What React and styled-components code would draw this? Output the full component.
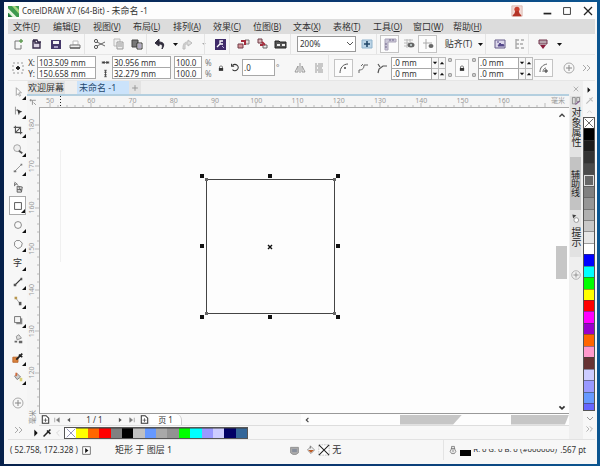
import React from 'react';
import styled, { createGlobalStyle } from 'styled-components';

const GlobalStyle = createGlobalStyle`
  * {
    box-sizing: border-box;
  }
  body {
    margin: 0;
    background: #0a2a55;
    color: #333;
    font-family: 'Noto Sans', 'Noto Sans CJK SC', sans-serif;
    font-size: 8px;
    line-height: 12px;
  }
  button,
  input,
  select {
    margin: 0;
    padding: 0;
    border: 0;
    background: none;
    color: inherit;
    font: inherit;
  }
  svg {
    display: block;
    flex: none;
  }
`;

/* ---------- frame ---------- */

const Desktop = styled.div`
  display: grid;
  min-height: 100vh;
  padding: 2px 3px 3px 4px;
  background: linear-gradient(90deg, #06204a 0, #0b3a74 60%, #0b5590 100%);
`;

const Window = styled.main`
  display: flex;
  flex-direction: column;
  min-width: 0;
  padding: 0 2px 0 4px;
  background: #f7f7f7;
  border-top: 1px solid #fdfdfd;
`;

const TitleBar = styled.header`
  display: flex;
  align-items: center;
  height: 16px;
  margin: 0 -2px 0 -4px;
  padding: 0 6px 0 4px;
  background: #fdfdfd;
`;

const Title = styled.h1`
  flex: 1;
  margin: 0 0 0 3px;
  font-size: 8px;
  font-weight: 400;

  span {
    font-size: 9px;
  }
`;

const CaptionButtons = styled.div`
  display: flex;
  align-items: center;
  gap: 10px;
`;

const CaptionButton = styled.button`
  display: grid;
  place-items: center;
  width: ${p => p.$width || 10}px;
  height: 14px;
`;

const MenuBar = styled.nav`
  display: flex;
  height: 15px;
  padding-left: 5px;
  background: #dcdcdc;
`;

const MenuItem = styled.button`
  width: 40px;
  color: #333;
  font-size: 9px;
  line-height: 15px;
  text-align: left;
  white-space: nowrap;

  small {
    font-size: 8px;
  }
`;

/* ---------- toolbars ---------- */

const Toolbar = styled.div`
  display: flex;
  align-items: center;
  height: ${p => p.$height}px;
  border-bottom: 1px solid #e6e6e6;
`;

const Group = styled.div`
  display: flex;
  align-items: center;
  height: 100%;
  padding-left: ${p => p.$pad || 0}px;
  border-left: ${p => (p.$line ? '1px solid #e4e4e4' : '0')};
`;

const ToolButton = styled.button`
  display: grid;
  flex: none;
  place-items: center;
  width: ${p => p.$width || 19}px;
  height: 18px;
  border: 1px solid ${p => (p.$boxed ? '#c4c4c4' : 'transparent')};
  background: ${p => (p.$boxed ? '#fcfcfc' : 'none')};
`;

const SnapButton = styled.button`
  width: 29px;
  font-size: 9px;
  white-space: nowrap;

  small {
    font-size: 8px;
  }
`;

const ZoomBox = styled.label`
  position: relative;
  width: 59px;
  height: 16px;
  margin: 0 1px 0 6px;

  select {
    width: 100%;
    height: 100%;
    padding-left: 2px;
    border: 1px solid #999;
    background: #fff;
    appearance: none;
  }
  svg {
    position: absolute;
    top: 1px;
    right: -1px;
    pointer-events: none;
  }
`;

const Stack = styled.div`
  display: flex;
  flex-direction: column;
  flex: none;
`;

const FieldLabel = styled.label`
  display: flex;
  align-items: center;
  gap: 2px;
  height: 11px;
  line-height: 11px;
`;

const FieldName = styled.span`
  width: 7px;
  text-align: right;
`;

const Field = styled.input`
  width: ${p => p.$width}px;
  height: ${p => p.$height || 12}px;
  padding-left: 1px;
  border: 1px solid #a8a8a8;
  background: #fff;
  line-height: 10px;
`;

const SpinRow = styled.div`
  display: flex;
  height: 11px;

  button {
    display: grid;
    place-items: center;
    width: 7px;
    height: 12px;
    border: 1px solid #bbb;
    border-left: 0;
  }
`;

const Percent = styled.span`
  width: 11px;
  padding-left: 1px;
  color: #777;
  line-height: 11px;
`;

const CornerMarks = styled.div`
  display: flex;
  flex-direction: column;
  gap: 9px;
  padding: 0 1px;
`;

const Spacer = styled.div`
  flex: ${p => (p.$size ? `0 0 ${p.$size}px` : '1')};
`;

/* ---------- work area ---------- */

const WorkArea = styled.div`
  display: grid;
  flex: 1;
  grid-template-columns: 19px minmax(0, 1fr) 14px 12px;
`;

const Toolbox = styled.aside`
  display: flex;
  flex-direction: column;
  align-items: center;
  padding-top: 1px;
`;

const ToolSlot = styled.button`
  position: relative;
  display: grid;
  flex: 0 0 19px;
  place-items: center;
  width: 17px;
  border: ${p => (p.$active ? '1px solid #aaa' : '0')};
  background: ${p => (p.$active ? '#fff' : 'none')};
  font-size: 9px;

  &::after {
    position: absolute;
    right: 0;
    bottom: 1px;
    border: solid transparent;
    border-width: ${p => (p.$flyout ? '4px 0 0 4px' : '0')};
    border-right: ${p => (p.$flyout ? '4px solid #111' : '0')};
    border-left: 0;
    content: '';
  }
`;

const Document = styled.section`
  display: flex;
  flex-direction: column;
  min-width: 0;
`;

const Tabs = styled.div`
  display: flex;
  height: 15px;
  padding-left: 1px;
  background: #efefef;
  border-bottom: 2px solid #b4cfdf;
`;

const Tab = styled.button`
  width: ${p => p.$width}px;
  height: 13px;
  padding-left: ${p => p.$pad || 0}px;
  background: ${p => (p.$active ? '#cbe3fb' : '#e3e3e3')};
  color: ${p => (p.$active ? '#24486e' : '#333')};
  font-size: 9px;
  line-height: 13px;
  text-align: left;
  white-space: nowrap;
`;

const Sheet = styled.div`
  display: grid;
  flex: 1;
  grid-template-rows: 11px minmax(0, 1fr);
  grid-template-columns: 12px minmax(0, 1fr);
  min-height: 317px;

  > svg {
    width: 100%;
    height: 100%;
    overflow: visible;
  }
`;

const RulerCorner = styled.div`
  display: grid;
  place-items: center;
  background: #f5f5f5;
`;

const CanvasRow = styled.div`
  display: flex;
  min-width: 0;
  background: #fdfdfd;
  border-top: 1px solid #aaa;
  border-left: 1px solid #aaa;

  > svg {
    flex: 1;
    min-width: 0;
    height: 100%;
  }
`;

const VScroll = styled.div`
  display: flex;
  flex-direction: column;
  align-items: center;
  width: 14px;
  padding: 1px 2px 1px 0;

  button {
    display: grid;
    place-items: center;
    width: 10px;
    height: 10px;
  }
`;

const VThumb = styled.div`
  flex: 34 0 0;
  width: 11px;
  background: #c6c6c6;
`;

const Track = styled.div`
  flex: ${p => p.$grow} 0 0;
`;

const PageBar = styled.div`
  display: flex;
  align-items: center;
  height: 13px;
  margin-left: 12px;
  border-top: 1px solid #999;
  border-bottom: 1px solid #ddd;
`;

const PageButton = styled.button`
  display: grid;
  flex: none;
  place-items: center;
  width: 12px;
  height: 11px;
`;

const PageCount = styled.span`
  flex: 0 0 39px;
  line-height: 11px;
  text-align: center;
`;

const PageTab = styled.button`
  flex: 0 0 32px;
  height: 11px;
  background: #fff;
  border-right: 1px solid #ccc;
  border-radius: 0 6px 0 0;
  line-height: 11px;
`;

const HScroll = styled.div`
  display: flex;
  flex: 266 0 0;
  align-items: center;
  height: 11px;
  background: #fdfdfd;
`;

const HThumb = styled.div`
  flex: ${p => p.$grow} 0 0;
  height: 10px;
  background: #c6c6c6;
  clip-path: polygon(0 0, 100% 0, calc(100% - ${p => p.$cut}px) 100%, 0 100%);
`;

const PaletteRow = styled.div`
  display: flex;
  align-items: center;
  height: 13px;
  padding-left: 3px;

  > button {
    display: grid;
    place-items: center;
    width: 11px;
    height: 12px;
  }
`;

const Swatches = styled.div`
  display: flex;
  width: 184px;
  height: 12px;
  margin-left: 1px;
  border: 1px solid #555;
`;

const Swatch = styled.button`
  display: grid;
  flex: ${p => p.$grow || 1} 0 0;
  place-items: center;
  min-width: 0;
  min-height: 0;
  overflow: hidden;
  background: ${p => p.$color};
  box-shadow: inset 0 0 0 ${p => (p.$ring ? 1 : 0)}px #ddd;

  & + & {
    border: solid rgba(60, 60, 60, 0.5);
    border-width: ${p => (p.$column ? '1px 0 0' : '0 0 0 1px')};
  }
`;

const Dockers = styled.aside`
  display: flex;
  flex-direction: column;
  align-items: center;
  padding: 0 2px 0 1px;
  background: #efefef;
`;

const DockerTab = styled.button`
  display: flex;
  align-items: center;
  gap: 1px;
  width: 11px;
  height: ${p => p.$height}px;
  background: ${p => (p.$dark ? '#c3c3c3' : '#e2e2e2')};
  color: #222;
  font-size: ${p => (p.$dark ? 9 : 10)}px;
  line-height: 11px;
  writing-mode: vertical-rl;
`;

const DockerButton = styled.button`
  display: grid;
  place-items: center;
  width: 11px;
  height: ${p => p.$height}px;
`;

const PaletteColumn = styled.aside`
  display: flex;
  flex-direction: column;
  padding-top: 3px;

  > button {
    display: grid;
    flex: none;
    place-items: center;
    height: 11px;
  }
`;

const ColumnSwatches = styled.div`
  display: flex;
  flex: 1;
  flex-direction: column;
  margin-bottom: 1px;
  border: 1px solid #555;
`;

const StatusBar = styled.footer`
  display: flex;
  align-items: center;
  height: 25px;
  padding: 0 9px 4px 2px;
  border-top: 1px solid #e2e2e2;
`;

const Coordinates = styled.span`
  width: 71px;
  white-space: nowrap;
`;

const ObjectInfo = styled.span`
  flex: 1;
  padding-left: 24px;
  font-size: 9px;
`;

const FillInfo = styled.span`
  display: flex;
  align-items: center;
  gap: 2px;
  width: 143px;
  padding-left: 6px;
  font-size: 9px;
`;

const OutlineInfo = styled.span`
  display: flex;
  align-items: center;
  padding-left: 4px;
  border-left: 1px solid #e4e4e4;
  line-height: 20px;
  white-space: nowrap;
`;

const OutlineChip = styled.i`
  width: 11px;
  height: 6px;
  margin: 5px 2px 0 2px;
  background: #000;
`;

const OutlineColor = styled.span`
  width: 87px;
  font-family: Roboto, 'Noto Sans', sans-serif;
  line-height: 12px;
  clip-path: inset(5px 0 0 0);
`;

/* ---------- drawings ---------- */

const ICONS = {
  logo: (
    <>
      <path d="M0 0h14v14H0z" fill="#3d9a4e" />
      <path d="M0 3l11 11H6L0 8z" fill="#e8f5df" />
      <path d="M5 0l9 10V5L9 0z" fill="#a9d77e" />
      <path d="M0 10l4 4H0z" fill="#1f6d3b" />
    </>
  ),
  user: (
    <>
      <path d="M1 1h12v12H1z" fill="#f2d9d4" stroke="#d9b6ae" />
      <circle cx="7" cy="5" r="3" fill="#c9412f" />
      <path d="M5 7h4l1 3 2 2v1H2v-1l2-2z" fill="#b43427" />
    </>
  ),
  minimize: <path d="M3 10h9" stroke="#222" strokeWidth="2" />,
  maximize: <path d="M3 3h8v8H3z" fill="none" stroke="#222" />,
  close: <path d="M3 3l8 8M11 3l-8 8" stroke="#222" strokeWidth="1.3" />,
  fresh: (
    <>
      <path d="M8 4H4v8h6V8" fill="none" stroke="#777" />
      <path d="M8 4h4M10 2v4" stroke="#5f9a52" strokeWidth="1.4" />
    </>
  ),
  open: <path d="M3 4v7h7V6H5V4zM3 3h4l1 2h3" fill="#dcd4e4" stroke="#382d4c" strokeWidth="1.4" />,
  save: (
    <>
      <path d="M2 3h10v9H2z" fill="#44376a" />
      <path d="M4 4h6v3H4z" fill="#f4f4f4" />
      <path d="M5 9h4v2H5z" fill="#a99fc6" />
    </>
  ),
  print: (
    <>
      <path d="M5 4h5v4H5z" fill="#fff" stroke="#bbb" />
      <path d="M2 8h10v3H2z" fill="#eee" stroke="#777" />
      <path d="M2 11h10" stroke="#444" />
    </>
  ),
  cut: (
    <>
      <path d="M5 5l8 4M5 9l8-4" stroke="#666" />
      <circle cx="4" cy="4" r="1.6" fill="none" stroke="#555" />
      <circle cx="4" cy="10" r="1.6" fill="none" stroke="#555" />
    </>
  ),
  copy: (
    <>
      <path d="M3 2h6v7H3z" fill="#f0f0f0" stroke="#bbb" />
      <path d="M6 5h6v7H6z" fill="#eee" stroke="#999" />
      <path d="M7 7h4M7 9h4" stroke="#999" />
    </>
  ),
  paste: (
    <>
      <path d="M2 3h6v7H2z" fill="#777" stroke="#444" />
      <path d="M7 6h5v6H7z" fill="#fff" stroke="#333" />
      <path d="M8 8h3M8 10h3" stroke="#66588a" />
    </>
  ),
  undo: <path d="M6 2L2 6l4 3V7c3 0 4 1 3 5 3-4 2-7-3-7z" fill="#302c3c" stroke="#302c3c" />,
  redo: <path d="M8 3l4 3-4 3V7H5v5H3c0-5 1-7 5-7z" fill="#ddd" stroke="#bbb" />,
  search: (
    <>
      <path d="M2 2h11v11H2z" fill="#3f2b69" />
      <path d="M10 4H7v3h3M7 7L4 10" stroke="#fff" fill="none" strokeWidth="1.3" />
      <path d="M9 9l2 2" stroke="#b9a4e0" />
    </>
  ),
  importer: (
    <>
      <path d="M2 7h5v4H2z" fill="#d69499" stroke="#713e49" />
      <path d="M9 3h4v4H9z" fill="#eadcdc" stroke="#777" />
      <path d="M5 4h4v4" fill="none" stroke="#a32c3c" strokeWidth="2" />
    </>
  ),
  exporter: (
    <>
      <path d="M3 2h4v4H3z" fill="#d9b5b8" stroke="#713e49" />
      <path d="M8 8h4v3H8z" fill="#eee" stroke="#666" />
      <path d="M5 8h3M7 5l3 3" fill="none" stroke="#a32c3c" strokeWidth="2" />
    </>
  ),
  publish: (
    <>
      <path d="M1 4h4l1 1h6v6H1z" fill="#555" stroke="#222" />
      <path d="M3 7h3v2H3zM8 7h3v2H8z" fill="#eee" />
    </>
  ),
  fullscreen: (
    <>
      <path d="M2 3h10v8H2z" fill="#bcd4e6" stroke="#8fb3cd" />
      <path d="M7 4v6M4 7h6" stroke="#22486a" strokeWidth="1.6" />
    </>
  ),
  rulers: (
    <>
      <path d="M2 2h11v3H5v8H2z" fill="#cbc7d8" stroke="#aaa4b8" />
      <path d="M7 2v2M10 2v2M2 7h2M2 10h2" stroke="#6f678a" />
    </>
  ),
  grid: (
    <>
      <path d="M2 3h9M2 6h5M2 9h3M5 2v9M8 2v3" stroke="#bbb" />
      <ellipse cx="9" cy="8" rx="3.5" ry="2.5" fill="#666" />
      <circle cx="9" cy="8" r="1" fill="#cdd" />
    </>
  ),
  guides: (
    <>
      <path d="M5 2v10M2 6h9" stroke="#aaa" />
      <ellipse cx="10" cy="9" rx="2.5" ry="2" fill="#666" />
    </>
  ),
  options: (
    <>
      <path d="M2 3h10v8H2z" fill="#dcd7ea" stroke="#655b88" />
      <path d="M5 9l2-3 2 2 1-1 1 2zM4 5h2" fill="#55488a" stroke="#55488a" />
    </>
  ),
  objects: <path d="M4 2v10M4 3h3M4 7h3M4 11h3M9 3h3M8 7h3M9 11h3" stroke="#aaa" strokeWidth="1.4" />,
  launcher: (
    <>
      <path d="M3 3h8v4H3z" fill="#b8a5ad" stroke="#71344c" />
      <path d="M4 8h6l-3 4z" fill="#8b1c3b" />
    </>
  ),
  origin: (
    <>
      <path d="M2 2h10v10H2z" fill="none" stroke="#999" strokeDasharray="2 2" />
      <path d="M7 5v4M5 7h4" stroke="#222" strokeWidth="1.8" />
    </>
  ),
  width: <path d="M2 7h10M2 5v4M12 5v4M5 5v4L3 7zM9 5v4l2-2z" fill="#333" stroke="#333" />,
  height: <path d="M7 2v10M5 2h4M5 12h4M5 5h4M5 9h4" stroke="#333" strokeWidth="1.2" />,
  lock: (
    <>
      <path d="M5 7V5q2-2 4 0v2" fill="none" stroke="#444" />
      <path d="M4 7h6v4H4z" fill="#333" />
    </>
  ),
  rotate: <path d="M4 9a4 3.5 0 1 0 0-5M3 2v3h3" fill="none" stroke="#333" strokeWidth="1.2" />,
  mirrorH: <path d="M7 2v10M5 5v6H2zM9 5v6h3z" fill="none" stroke="#999" />,
  mirrorV: <path d="M4 2v10M6 3h5M5 5h6M6 7h4M5 9h6M6 11h5" fill="none" stroke="#999" />,
  cornerRound: (
    <>
      <path d="M3 12C3 7 6 3 11 3" fill="none" stroke="#555" />
      <circle cx="8" cy="7" r="1" fill="#444" />
    </>
  ),
  cornerScallop: <path d="M3 12V9c4 0 5-2 5-5h4M5 5l2-2" fill="none" stroke="#666" />,
  cornerChamfer: <path d="M3 3l2 3M3 12l1-4 4-3h4" fill="none" stroke="#555" strokeWidth="1.2" />,
  relative: (
    <>
      <path d="M3 11c0-4 2-7 7-8M6 11c0-2 1-4 3-4" fill="none" stroke="#666" />
      <path d="M9 8v4M7 10h4" stroke="#333" />
    </>
  ),
  plus: (
    <>
      <circle cx="7" cy="7" r="5" fill="none" stroke="#aaa" />
      <path d="M7 4v6M4 7h6" stroke="#888" />
    </>
  ),
  tabPlus: <path d="M7 3v8M3 7h8" stroke="#999" strokeWidth="1.4" />,
  more: <path d="M4 4l3 3-3 3M8 4l3 3-3 3" fill="none" stroke="#aaa" />,
  chevronDown: <path d="M4 5l3 3 3-3" fill="none" stroke="#555" />,
  scrollDown: <path d="M4 5l3 3 3-3" fill="none" stroke="#333" strokeWidth="2" />,
  scrollUp: <path d="M4 9l3-3 3 3" fill="none" stroke="#444" strokeWidth="1.6" />,
  scrollLeft: <path d="M9 4L6 7l3 3" fill="none" stroke="#444" strokeWidth="1.6" />,
  fadeUp: <path d="M4 9l3-3 3 3" fill="none" stroke="#ccc" />,
  fadeLeft: <path d="M9 3L5 7l4 4" fill="none" stroke="#ccc" />,
  fadeDown: <path d="M4 5l3 3 3-3" fill="none" stroke="#999" />,
  fadeClose: <path d="M3 3l8 8M11 3l-8 8" stroke="#888" />,
  caret: <path d="M4 6h5L6.5 9z" fill="#111" />,
  caretPale: <path d="M5 6h4L7 8z" fill="#aaa" />,
  right: <path d="M5 3l4 4-4 4z" fill="#111" />,
  spinDown: <path d="M2 4h10l-5 6z" fill="#111" />,
  spinUp: <path d="M2 10h10L7 4z" fill="#111" />,
  pick: <path d="M5 2v9l2-2 2 3 1-1-2-3h3z" fill="#fff" stroke="#999" />,
  shape: (
    <>
      <path d="M4 2v9M4 6h3" stroke="#888" />
      <path d="M6 5l6 3-3 1-1 3z" fill="#333" />
    </>
  ),
  crop: <path d="M4 2v8h8M2 4h8v8M4 10l6-6" fill="none" stroke="#555" strokeWidth="1.3" />,
  zoomTool: (
    <>
      <circle cx="6" cy="6" r="4" fill="#eee" stroke="#999" />
      <path d="M8 9l4 3" stroke="#555" strokeWidth="2" />
    </>
  ),
  freehand: (
    <>
      <path d="M3 11l8-8" stroke="#888" />
      <path d="M2 10h3v2H2zM10 2h2v2h-2z" fill="#777" />
    </>
  ),
  smart: (
    <>
      <path d="M3 1l4 4M3 5l3-2M3 2v4" stroke="#666" />
      <path d="M6 6l6 1-1 6H6zM8 7l3 5M6 10h5" fill="#ddd" stroke="#555" />
    </>
  ),
  rectangle: <path d="M3 3h8v8H3z" fill="#fff" stroke="#444" />,
  ellipse: <circle cx="7" cy="7" r="4" fill="#fafafa" stroke="#777" />,
  polygon: <path d="M5 3h4l3 3-1 4-3 2H6L3 9V5z" fill="#fafafa" stroke="#777" />,
  dimension: (
    <>
      <path d="M3 11l8-8" stroke="#333" strokeWidth="1.4" />
      <path d="M2 9h3v3H2zM10 2h2v3h-2z" fill="#555" />
    </>
  ),
  connector: (
    <>
      <path d="M4 3l6 8" stroke="#999" />
      <path d="M3 2h3v3H3z" fill="#b7964e" />
      <path d="M8 8h3v4H8z" fill="#555" />
    </>
  ),
  shadow: (
    <>
      <path d="M5 5h7v7H5z" fill="#888" />
      <path d="M3 3h7v7H3z" fill="#f4f4f4" stroke="#666" />
    </>
  ),
  transparency: (
    <>
      <path d="M5 4l3-2 3 4-5 2z" fill="#ddd" stroke="#888" />
      <path d="M8 9h4v3H8zM3 9h3v2H3z" fill="#666" />
    </>
  ),
  eyedropper: (
    <>
      <path d="M1 6h6v6H1z" fill="#d9823d" stroke="#b66329" />
      <path d="M5 9l5-5M8 3l4 3M10 4l2-2" stroke="#222" strokeWidth="2" />
    </>
  ),
  fillTool: (
    <>
      <path d="M3 6l3-3 4 4-4 3z" fill="#ccc" stroke="#777" />
      <path d="M5 2v4" stroke="#d36c3c" strokeWidth="2" />
      <path d="M9 8h3v4H9z" fill="#d8cf76" />
    </>
  ),
  picker: <path d="M3 11l6-6M7 4l4 4M9 5l2-2" stroke="#222" strokeWidth="1.8" />,
  pickerPale: <path d="M3 11l6-6M7 4l4 4M9 5l2-2" stroke="#bbb" strokeWidth="1.4" />,
  page: (
    <>
      <path d="M2 1h6l4 4v8H2z" fill="#fff" stroke="#333" strokeWidth="1.6" />
      <path d="M7 5v6M4 8h6" stroke="#333" />
    </>
  ),
  first: <path d="M3 3v8M11 3v8L6 7z" fill="#777" stroke="#777" />,
  previous: <path d="M9 3v8L4 7z" fill="#555" />,
  next: <path d="M5 3v8l5-4z" fill="#555" />,
  last: <path d="M11 3v8M3 3v8l5-4z" fill="#777" stroke="#777" />,
  none: <path d="M1 1l12 12M13 1L1 13" stroke="#333" />,
  nonePale: <path d="M1 1l12 12M13 1L1 13" stroke="#6c6c9c" />,
  noneBox: (
    <>
      <path d="M1 1h12v12H1z" fill="#fff" stroke="#bbb" strokeDasharray="2 1" />
      <path d="M1 1l12 12M13 1L1 13" stroke="#222" strokeWidth="1.2" />
    </>
  ),
  play: (
    <>
      <path d="M1 1h12v12H1z" fill="#fff" stroke="#333" />
      <path d="M5 3l5 4-5 4z" fill="#111" />
    </>
  ),
  proof: (
    <>
      <path d="M2 3h10v7l-3 2H5l-3-2z" fill="#aaa" stroke="#888" />
      <path d="M4 5h6v4H4z" fill="#888f9c" />
    </>
  ),
  bucket: (
    <>
      <path d="M2 7l5-5 5 5-5 5z" fill="#eee" stroke="#777" />
      <path d="M3 7h8l-4 4z" fill="#bd5b25" />
      <path d="M6 1v4" stroke="#555" />
    </>
  ),
  pen: <path d="M5 2h4v3l2 4-2 3H5L3 9l2-4zM7 6v4M4 5h6" fill="#eee" stroke="#666" />,
  corner: <path d="M2 3h2v2H2zM6 4h6M6 4v8M8 8l4 4" fill="none" stroke="#555" />,
  cornerMark: <path d="M4 4h6v6H4z" fill="none" stroke="#777" strokeWidth="2" />,
  docker: (
    <>
      <path d="M2 2h4v9H2zM8 2h4v6H8z" fill="#ddd" stroke="#777" />
      <path d="M6 12l6-5" stroke="#85658f" strokeWidth="2" />
    </>
  ),
  hint: (
    <>
      <path d="M3 2l5 1-4 4z" fill="#444" />
      <circle cx="8" cy="9" r="3" fill="#fff" stroke="#888" />
    </>
  ),
};

const Icon = ({ name, size = 14 }) => (
  <svg width={size} height={size} viewBox="0 0 14 14" aria-hidden="true">
    {ICONS[name]}
  </svg>
);

const MENUS = [
  ['文件', 'F'],
  ['编辑', 'E'],
  ['视图', 'V'],
  ['布局', 'L'],
  ['排列', 'A'],
  ['效果', 'C'],
  ['位图', 'B'],
  ['文本', 'X'],
  ['表格', 'T'],
  ['工具', 'O'],
  ['窗口', 'W'],
  ['帮助', 'H'],
];

const TOOLS = [
  ['pick', true],
  ['shape', true],
  ['crop', true],
  ['zoomTool', true],
  ['freehand', true],
  ['smart', false],
  ['rectangle', true],
  ['ellipse', true],
  ['polygon', true],
  ['text', true],
  ['dimension', true],
  ['connector', true],
  ['shadow', true],
  ['transparency', false],
  ['eyedropper', true],
  ['fillTool', true],
];

const DOCUMENT_COLORS = [
  '#ffff00', '#ff6600', '#ff0000', '#808080', '#000000', '#c0c0c0', '#6699ff', '#a8a8a8',
  '#929292', '#00ff00', '#00ffff', '#9999ff', '#ccccff', '#000066', '#336699',
];

const PALETTE_COLORS = [
  '#000000', '#1c1c1c', '#333333', '#4a4a4a', '#666666', '#808080', '#969696', '#b0b0b0',
  '#c8c8c8', '#e6e6e6', '#ffffff', '#0000ff', '#00ffff', '#00ff00', '#ffff00', '#ff0000',
  '#ff00ff', '#9900cc', '#ff6600', '#ff99cc', '#663333', '#ccccff', '#9999ff', '#6699ff',
];

// ruler ticks: one label every 10 mm
const RULER_X = [50, 60, 70, 80, 90, 100, 110, 120, 130, 140, 150, 160];
const RULER_Y = [180, 170, 160, 150, 140, 130, 120];
const STEP = 41.25;

const HorizontalRuler = () => (
  <svg>
    <rect width="100%" height="100%" fill="#f5f5f5" />
    {Array.from({ length: 62 }, (_, i) => (
      <path
        key={i}
        d={`M${Math.round(11 + (i * STEP) / 5)} 11v${i % 5 === 0 ? -4 : -2}`}
        stroke="#bbb"
      />
    ))}
    {RULER_X.map((n, i) => (
      <text key={n} x={11 + i * STEP} y="7" fill="#999" fontSize="7" textAnchor="middle">
        {n}
      </text>
    ))}
    <rect x="509" width="20" height="11" fill="#f5f5f5" />
    <text x="512" y="7" fill="#999" fontSize="7">
      毫米
    </text>
    <path d="M21.5 0v11" stroke="#222" strokeDasharray="1 2" />
  </svg>
);

const VerticalRuler = () => (
  <svg>
    <rect width="100%" height="100%" fill="#f5f5f5" />
    {Array.from({ length: 35 }, (_, i) => (
      <path
        key={i}
        d={`M12 ${Math.round(18 + (i * STEP) / 5)}h${i % 5 === 0 ? -4 : -2}`}
        stroke="#bbb"
      />
    ))}
    {RULER_Y.map((n, i) => (
      <text
        key={n}
        fill="#999"
        fontSize="7"
        textAnchor="middle"
        transform={`translate(7 ${18 + i * STEP}) rotate(-90)`}
      >
        {n}
      </text>
    ))}
    <text fill="#888" fontSize="7" transform="translate(8 317) rotate(-90)">
      毫米
    </text>
  </svg>
);

const HANDLES = [
  [162, 68], [230, 68], [298, 68],
  [162, 138], [298, 138],
  [162, 209], [230, 209], [298, 209],
];

const Drawing = () => (
  <svg role="img" aria-label="矩形">
    <path d="M20.5 42v112" stroke="#f0f0f0" />
    <rect x="166.5" y="71.5" width="128" height="134" fill="none" stroke="#444" />
    {HANDLES.map(([x, y]) => (
      <rect key={`${x}-${y}`} x={x - 2} y={y - 2} width="4" height="4" fill="#111" />
    ))}
    <path d="M228 137l4 4M232 137l-4 4" stroke="#111" strokeWidth="1.4" />
    {[[166, 71], [294, 71], [166, 205], [294, 205]].map(([x, y]) => (
      <rect key={`${x}-${y}`} x={x - 1} y={y - 1} width="3" height="3" fill="#666" />
    ))}
  </svg>
);

const Tool = ({ name, ...rest }) => (
  <ToolButton aria-label={name} {...rest}>
    <Icon name={name} />
  </ToolButton>
);

const PageStep = ({ name, label, size = 8 }) => (
  <PageButton aria-label={label}>
    <Icon name={name} size={size} />
  </PageButton>
);

const CornerFields = ({ side }) => (
  <Stack>
    {['top', 'bottom'].map(row => (
      <SpinRow key={row}>
        <Field $width={41} defaultValue=".0 mm" aria-label={`${side} ${row}`} />
        <button aria-label="-">
          <Icon name="spinDown" size={6} />
        </button>
        <button aria-label="+">
          <Icon name="spinUp" size={6} />
        </button>
      </SpinRow>
    ))}
  </Stack>
);

const Marks = () => (
  <CornerMarks>
    <Icon name="cornerMark" size={6} />
    <Icon name="cornerMark" size={6} />
  </CornerMarks>
);

const StandardBar = () => (
  <Toolbar $height={21}>
    <Tool name="fresh" />
    <Tool name="open" />
    <Tool name="save" />
    <Tool name="print" />
    <Group $line $pad={4}>
      <Tool name="cut" />
      <Tool name="copy" />
      <Tool name="paste" />
    </Group>
    <Group $line $pad={5}>
      <Tool name="undo" $width={16} />
      <Tool name="caret" $width={10} />
      <Tool name="redo" $width={18} />
      <Tool name="caretPale" $width={8} />
    </Group>
    <Group $line $pad={5}>
      <Tool name="search" />
    </Group>
    <Group $line $pad={3}>
      <Tool name="importer" />
      <Tool name="exporter" />
      <Tool name="publish" />
    </Group>
    <Group $line>
      <ZoomBox>
        <select aria-label="缩放级别" defaultValue="200%">
          <option>100%</option>
          <option>200%</option>
        </select>
        <Icon name="chevronDown" />
      </ZoomBox>
      <Tool name="fullscreen" />
    </Group>
    <Group $line $pad={3}>
      <Tool name="rulers" $boxed />
      <Tool name="grid" />
      <Tool name="guides" $boxed />
    </Group>
    <Group $pad={7}>
      <SnapButton>
        贴齐<small>(T)</small>
      </SnapButton>
      <Tool name="caret" $width={12} />
    </Group>
    <Group $line $pad={4}>
      <Tool name="options" />
      <Tool name="objects" />
    </Group>
    <Group $line $pad={4}>
      <Tool name="launcher" />
      <Tool name="caret" $width={8} />
    </Group>
  </Toolbar>
);

const PropertyBar = () => (
  <Toolbar $height={26}>
    <Tool name="origin" />
    <Spacer $size={1} />
    <Stack>
      <FieldLabel>
        <FieldName>X:</FieldName>
        <Field $width={59} defaultValue="103.509 mm" />
      </FieldLabel>
      <FieldLabel>
        <FieldName>Y:</FieldName>
        <Field $width={59} defaultValue="150.658 mm" />
      </FieldLabel>
    </Stack>
    <Spacer $size={5} />
    <Stack>
      <FieldLabel>
        <Icon name="width" size={9} />
        <Field $width={59} defaultValue="30.956 mm" aria-label="宽度" />
      </FieldLabel>
      <FieldLabel>
        <Icon name="height" size={9} />
        <Field $width={59} defaultValue="32.279 mm" aria-label="高度" />
      </FieldLabel>
    </Stack>
    <Spacer $size={3} />
    <Stack>
      <FieldLabel>
        <Field $width={28} defaultValue="100.0" aria-label="水平缩放" />
        <Percent>%</Percent>
      </FieldLabel>
      <FieldLabel>
        <Field $width={28} defaultValue="100.0" aria-label="垂直缩放" />
        <Percent>%</Percent>
      </FieldLabel>
    </Stack>
    <ToolButton $width={12} aria-label="锁定比率">
      <Icon name="lock" size={10} />
    </ToolButton>
    <Spacer $size={1} />
    <ToolButton $width={14} aria-label="旋转">
      <Icon name="rotate" size={12} />
    </ToolButton>
    <Field $width={33} $height={17} defaultValue=".0" aria-label="旋转角度" />
    <Percent>°</Percent>
    <Group $pad={4}>
      <Tool name="mirrorH" />
      <Tool name="mirrorV" />
    </Group>
    <Group $line $pad={5}>
      <Tool name="cornerRound" $boxed />
      <Tool name="cornerScallop" />
      <Tool name="cornerChamfer" />
    </Group>
    <CornerFields side="left" />
    <Marks />
    <Spacer $size={1} />
    <ToolButton $width={14} $boxed aria-label="同时编辑所有角">
      <Icon name="lock" size={10} />
    </ToolButton>
    <Spacer $size={1} />
    <Marks />
    <CornerFields side="right" />
    <Spacer $size={1} />
    <Tool name="relative" $boxed />
    <Spacer />
    <Tool name="plus" />
    <Tool name="more" $width={15} />
    <Spacer $size={2} />
  </Toolbar>
);

function App() {
  return (
    <>
      <GlobalStyle />
      <Desktop>
        <Window>
          <TitleBar>
            <Icon name="logo" size={11} />
            <Title>
              CorelDRAW X7 (64-Bit) - <span>未命名</span> -1
            </Title>
            <CaptionButtons>
              <CaptionButton $width={28} aria-label="用户">
                <Icon name="user" size={12} />
              </CaptionButton>
              <CaptionButton aria-label="最小化">
                <Icon name="minimize" size={12} />
              </CaptionButton>
              <CaptionButton aria-label="最大化">
                <Icon name="maximize" size={12} />
              </CaptionButton>
              <CaptionButton aria-label="关闭">
                <Icon name="close" size={14} />
              </CaptionButton>
            </CaptionButtons>
          </TitleBar>
          <MenuBar>
            {MENUS.map(([label, key]) => (
              <MenuItem key={key}>
                {label}
                <small>
                  (<u>{key}</u>)
                </small>
              </MenuItem>
            ))}
          </MenuBar>
          <StandardBar />
          <PropertyBar />
          <WorkArea>
            <Toolbox>
              {TOOLS.map(([name, flyout]) => (
                <ToolSlot
                  key={name}
                  aria-label={name}
                  $flyout={flyout}
                  $active={name === 'rectangle'}
                >
                  {name === 'text' ? '字' : <Icon name={name} size={12} />}
                </ToolSlot>
              ))}
              <Spacer />
              <ToolSlot aria-label="添加">
                <Icon name="plus" />
              </ToolSlot>
              <Spacer />
              <ToolSlot aria-label="更多">
                <Icon name="more" />
              </ToolSlot>
            </Toolbox>

            <Document>
              <Tabs>
                <Tab $width={37}>欢迎屏幕</Tab>
                <Spacer $size={12} />
                <Tab $active $width={52} $pad={2}>
                  未命名 -1
                </Tab>
                <Tab $width={12} $pad={1} aria-label="新建">
                  <Icon name="tabPlus" size={10} />
                </Tab>
              </Tabs>
              <Sheet>
                <RulerCorner>
                  <Icon name="corner" size={8} />
                </RulerCorner>
                <HorizontalRuler />
                <VerticalRuler />
                <CanvasRow>
                  <Drawing />
                  <VScroll>
                    <button aria-label="向上">
                      <Icon name="scrollUp" size={12} />
                    </button>
                    <Track $grow={127} />
                    <VThumb />
                    <Track $grow={123} />
                    <button aria-label="向下">
                      <Icon name="scrollDown" size={12} />
                    </button>
                  </VScroll>
                </CanvasRow>
              </Sheet>
              <PageBar>
                <PageStep name="page" label="添加页" size={9} />
                <PageStep name="first" label="第一页" />
                <PageStep name="previous" label="上一页" />
                <PageCount>1 / 1</PageCount>
                <PageStep name="next" label="下一页" />
                <PageStep name="last" label="最后一页" />
                <PageStep name="page" label="在后添加页" size={9} />
                <PageTab>页 1</PageTab>
                <Track $grow={118} />
                <HScroll>
                  <PageButton aria-label="向左">
                    <Icon name="scrollLeft" size={10} />
                  </PageButton>
                  <Track $grow={86} />
                  <HThumb $grow={62} $cut={9} />
                  <Track $grow={48} />
                  <HThumb $grow={58} $cut={4} />
                </HScroll>
              </PageBar>
              <PaletteRow>
                <button aria-label="调色板">
                  <Icon name="right" size={12} />
                </button>
                <button aria-label="滴管">
                  <Icon name="picker" size={12} />
                </button>
                <button aria-label="向左滚动">
                  <Icon name="fadeLeft" size={10} />
                </button>
                <Swatches>
                  <Swatch $color="#fff" aria-label="无">
                    <Icon name="nonePale" size={10} />
                  </Swatch>
                  {DOCUMENT_COLORS.map(color => (
                    <Swatch key={color} $color={color} aria-label={color} />
                  ))}
                </Swatches>
              </PaletteRow>
            </Document>

            <Dockers>
              <DockerButton $height={15} aria-label="关闭泊坞窗">
                <Icon name="fadeClose" size={8} />
              </DockerButton>
              <DockerTab $height={61}>
                <Icon name="docker" size={10} />
                对象属性
              </DockerTab>
              <DockerTab $height={53} $dark>
                <Spacer />
                辅助线
                <Spacer />
              </DockerTab>
              <DockerTab $height={47}>
                <Spacer $size={2} />
                <Icon name="hint" size={11} />
                <Spacer $size={1} />
                提示
              </DockerTab>
              <DockerButton $height={36} aria-label="添加泊坞窗">
                <Icon name="plus" size={12} />
              </DockerButton>
            </Dockers>

            <PaletteColumn>
              <button aria-label="调色板菜单">
                <Icon name="right" size={10} />
              </button>
              <button aria-label="滴管">
                <Icon name="pickerPale" size={11} />
              </button>
              <button aria-label="向上滚动">
                <Icon name="fadeUp" size={11} />
              </button>
              <ColumnSwatches>
                <Swatch $column $color="#fff" aria-label="无">
                  <Icon name="none" size={10} />
                </Swatch>
                {PALETTE_COLORS.map(color => (
                  <Swatch
                    key={color}
                    $column
                    $color={color}
                    $ring={color === '#666666'}
                    aria-label={color}
                  />
                ))}
                <Swatch $column $grow={0.6} $color="#6666ff" aria-label="#6666ff" />
              </ColumnSwatches>
              <button aria-label="向下滚动">
                <Icon name="fadeDown" />
              </button>
              <button aria-label="更多">
                <Icon name="more" size={12} />
              </button>
              <Spacer $size={5} />
            </PaletteColumn>
          </WorkArea>
          <StatusBar>
            <Coordinates>( 52.758, 172.328 )</Coordinates>
            <ToolButton $width={10} aria-label="显示">
              <Icon name="play" size={9} />
            </ToolButton>
            <ObjectInfo>矩形 于 图层 1</ObjectInfo>
            <Icon name="proof" size={11} />
            <FillInfo>
              <Icon name="bucket" size={10} />
              <Icon name="noneBox" size={12} />
              无
            </FillInfo>
            <OutlineInfo>
              <Icon name="pen" size={10} />
              <OutlineChip />
              <OutlineColor>R: 0 G: 0 B: 0 (#000000)</OutlineColor>
              .567 pt
            </OutlineInfo>
          </StatusBar>
        </Window>
      </Desktop>
    </>
  );
}

export default App;
